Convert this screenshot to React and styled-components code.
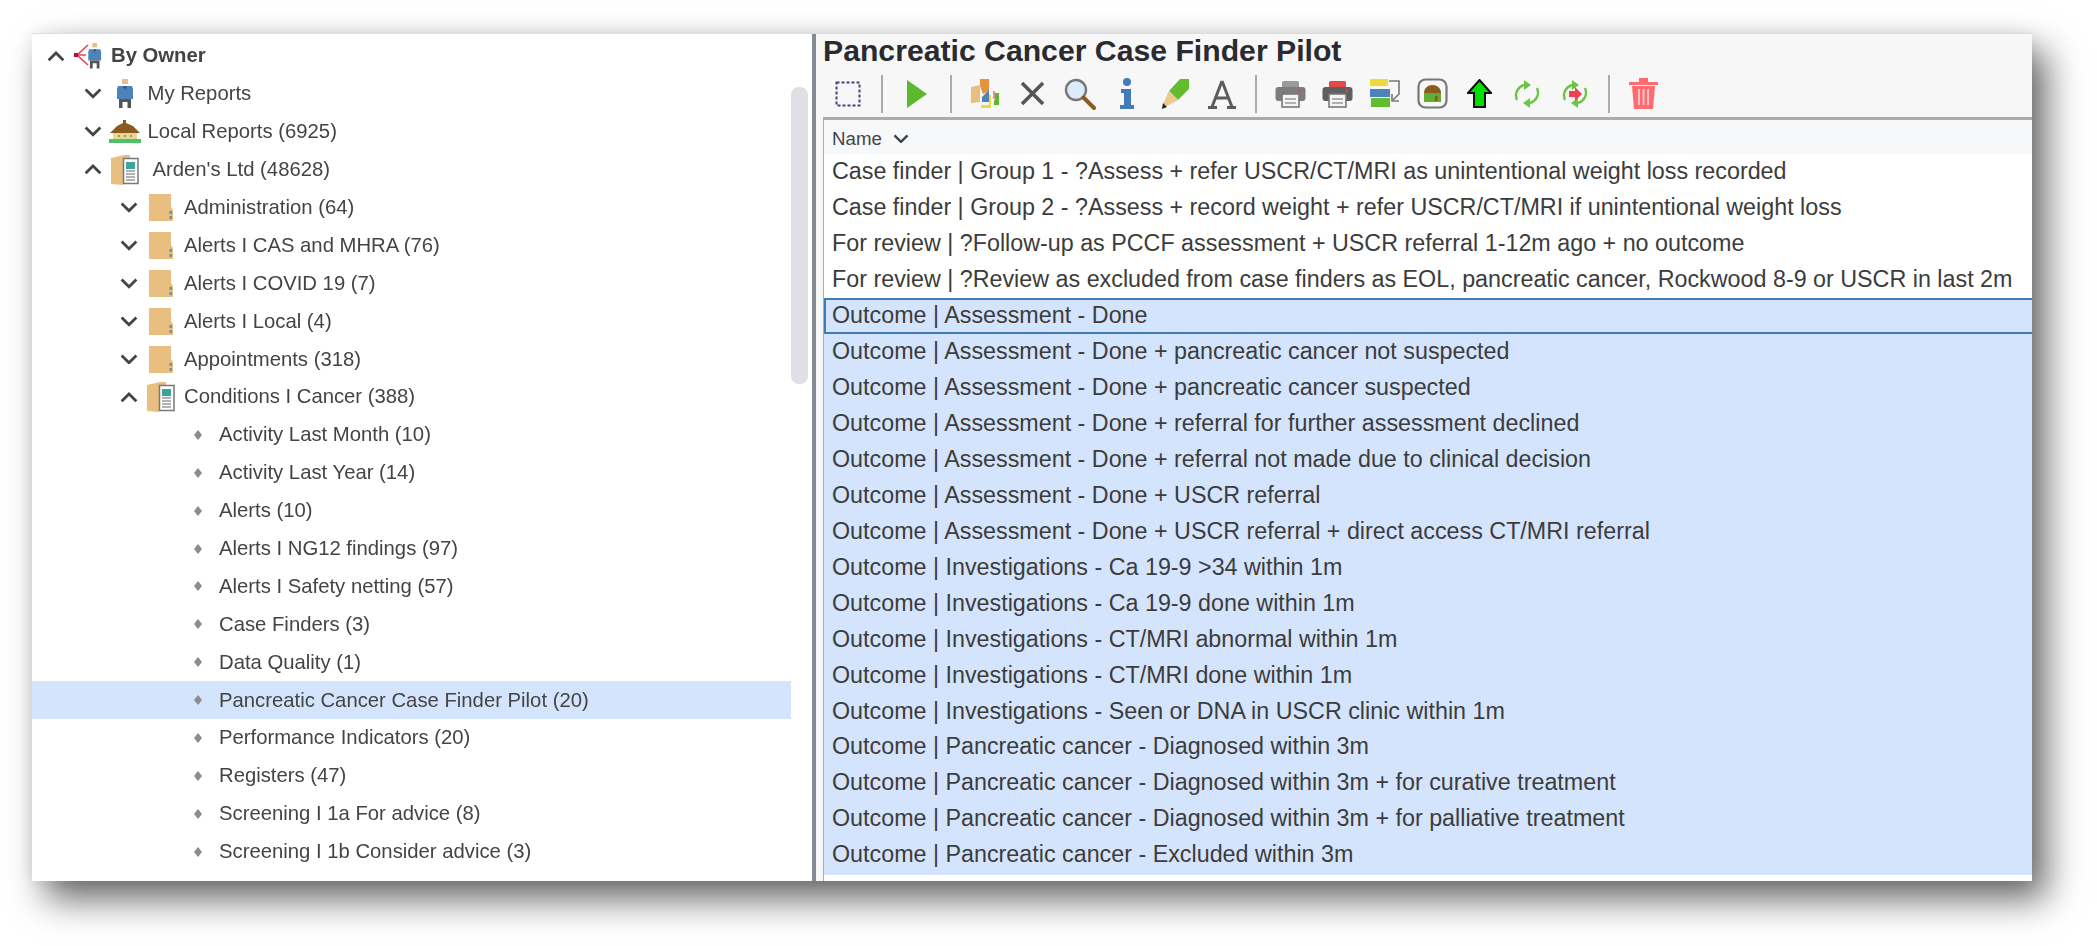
import React from 'react';
import styled, { createGlobalStyle } from 'styled-components';

const Global = createGlobalStyle`
  html, body { margin: 0; padding: 0; background: #fff; }
  body { font-family: "Liberation Sans", Arial, sans-serif; }
`;

const Page = styled.div`
  width: 2097px;
  height: 946px;
  box-sizing: border-box;
  padding: 33px 65px 65px 32px;
  overflow: hidden;
`;
const Frame = styled.div`
  display: flex;
  height: 848px;
  background: #fff;
  border-top: 1px solid #dcdce2;
  box-sizing: border-box;
  box-shadow: 14px 18px 34px rgba(0, 0, 0, 0.6), 0 0 18px rgba(0, 0, 0, 0.08);
  filter: blur(0.45px);
`;
const Left = styled.div`
  display: flex;
  width: 784px;
  flex-shrink: 0;
  overflow: hidden;
`;
const Tree = styled.div`
  width: 759px;
  padding-top: 3px;
  flex-shrink: 0;
`;
const TreeRow = styled.div`
  display: flex;
  align-items: center;
  height: 37.9px;
  padding-left: ${(p) => 12 + p.$level * 36.5}px;
  font-size: 20.3px;
  color: #444;
  font-weight: ${(p) => (p.$bold ? 700 : 400)};
  background: ${(p) => (p.$selected ? '#d4e4fc' : 'transparent')};
  white-space: nowrap;
`;
const ChevronSlot = styled.div`
  display: flex;
  justify-content: center;
  width: 24px;
  flex-shrink: 0;
`;
const IconSlot = styled.div`
  display: flex;
  justify-content: center;
  width: 40px;
  margin-right: ${(p) => p.$after || 3}px;
  flex-shrink: 0;
`;
const LeafSlot = styled.div`
  width: 25px;
  padding-left: 4px;
  display: flex;
  flex-shrink: 0;
`;
const ScrollTrack = styled.div`
  width: 17px;
  padding-top: 53px;
  flex-shrink: 0;
`;
const ScrollThumb = styled.div`
  height: 297px;
  background: #dfe0e3;
  border-radius: 8px;
`;
const Splitter = styled.div`
  width: 4px;
  margin-left: 4px;
  background: #858b92;
  flex-shrink: 0;
`;
const Right = styled.div`
  flex: 1;
  min-width: 0;
  display: flex;
  flex-direction: column;
  background: #f7f7f7;
`;
const Title = styled.div`
  box-sizing: border-box;
  height: 36px;
  padding: 0 0 3px 7px;
  display: flex;
  align-items: center;
  font-size: 30.2px;
  font-weight: 700;
  color: #2a2a30;
  white-space: nowrap;
`;
const Toolbar = styled.div`
  display: flex;
  align-items: center;
  height: 47px;
  padding-left: 8.5px;
`;
const Tool = styled.div`
  display: flex;
  align-items: center;
  justify-content: center;
  width: 47.4px;
  height: 40px;
  flex-shrink: 0;
`;
const Separator = styled.div`
  width: 21px;
  height: 38px;
  flex-shrink: 0;
  display: flex;
  justify-content: center;
  &::before {
    content: '';
    width: 2px;
    background: #a9abad;
  }
`;
const List = styled.div`
  flex: 1;
  display: flex;
  flex-direction: column;
  margin-left: 7px;
  border-top: 3px solid #a9abae;
  border-left: 1.5px solid #a9abae;
  background: #fff;
`;
const ListHeader = styled.div`
  display: flex;
  align-items: center;
  gap: 11px;
  box-sizing: border-box;
  height: 34px;
  flex-shrink: 0;
  padding: 3px 0 0 8px;
  background: #f7f8fa;
  font-size: 18.7px;
  color: #444;
`;
const ListRow = styled.div`
  display: flex;
  align-items: center;
  box-sizing: border-box;
  height: 35.95px;
  padding-left: 6px;
  font-size: 23.3px;
  color: #3c3c3c;
  white-space: nowrap;
  background: ${(p) => (p.$selected ? '#d4e4fc' : '#fff')};
  border: 2px solid ${(p) => (p.$focused ? '#3d7cb4' : 'transparent')};
  border-right: 0;
  &:last-child {
    height: 37.95px;
    padding-bottom: 2px;
  }
`;

const Chevron = ({ up, size = 18 }) => (
  <svg width={size} height={size * 0.6} viewBox="0 0 18 11">
    <path
      d={up ? 'M1.5 9.5 9 2l7.5 7.5' : 'M1.5 1.5 9 9l7.5-7.5'}
      fill="none"
      stroke="#444"
      strokeWidth="2.8"
    />
  </svg>
);

const Person = () => (
  <g>
    <rect x="6" y="0" width="6" height="5" fill="#e6c08c" />
    <path d="M2 7h14l1 3v10H1V10z" fill="#4d82ba" />
    <path d="M7 7h4l-2 4z" fill="#36587c" />
    <path d="M3 20h12v9h-3.5v-6h-5v6H3z" fill="#555" />
  </g>
);

const ByOwnerIcon = () => (
  <svg width="28" height="26" viewBox="0 0 28 26">
    <path d="M14 2 3 12l11 10M3 12h9" fill="none" stroke="#e8405c" strokeWidth="1.6" />
    <rect x="0" y="10" width="4" height="4" fill="#b01040" />
    <g transform="translate(13.5 0) scale(.8 .88)">
      <Person />
    </g>
  </svg>
);

const PersonIcon = () => (
  <svg width="18" height="29" viewBox="0 0 18 29">
    <Person />
  </svg>
);

const HouseIcon = () => (
  <svg width="32" height="24" viewBox="0 0 32 24">
    <path d="M14 0h3v3l7 3 7 7H1l7-7 6-3z" fill="#8b5a1e" />
    <rect x="4" y="13" width="24" height="6" fill="#ead49a" />
    <path d="M9 15h2v2H9zM15 15h2v2h-2zM21 15h2v2h-2z" fill="#7fb04a" />
    <rect x="0" y="19" width="32" height="4" fill="#4fc16a" />
  </svg>
);

const LedgerIcon = () => (
  <svg width="28" height="30" viewBox="0 0 28 30">
    <path d="M0 3 13 0h6v3H12v27L0 29z" fill="#e8bf80" />
    <rect x="12.5" y="3.5" width="14.5" height="25" fill="#fff" stroke="#777" strokeWidth="1.5" />
    <rect x="15" y="7" width="9" height="7" fill="#3aa59a" />
    <path d="M15 16h9M15 19h9M15 22h9M15 25h9" stroke="#666" strokeWidth="1.2" />
  </svg>
);

const FolderIcon = () => (
  <svg width="26" height="29" viewBox="0 0 26 29">
    <path d="M1 1h22v13l2 3v11H1z" fill="#e8bf80" />
    <rect x="21.5" y="18" width="2.5" height="3" fill="#6f8fa8" />
    <rect x="21.5" y="23" width="2.5" height="3" fill="#6f8fa8" />
  </svg>
);

const Diamond = () => (
  <svg width="8" height="10" viewBox="0 0 8 10">
    <path d="M4 0 8 5 4 10 0 5z" fill="#8c8c8c" />
  </svg>
);

const SelectIcon = () => (
  <svg width="26" height="26" viewBox="0 0 26 26">
    <rect x="1.5" y="1.5" width="23" height="23" fill="none" stroke="#44447a" strokeWidth="2" strokeDasharray="3 2" />
  </svg>
);
const PlayIcon = () => (
  <svg width="20" height="28" viewBox="0 0 20 28">
    <path d="M0 0 20 14 0 28z" fill="#5cb82c" />
  </svg>
);
const CopyIcon = () => (
  <svg width="28" height="30" viewBox="0 0 28 30">
    <path d="M0 8 9 6v17l-9 1z" fill="#e8bf80" />
    <path d="M9 0h9v12l-6 3-3-8z" fill="#e8923c" />
    <path d="M11 18l7-7v12h-7z" fill="#4d82ba" />
    <path d="M10 26h10v3H10z" fill="#ecd93a" />
    <path d="M18 16h2v10h-2z" fill="#ecd93a" />
    <path d="M22 12h2v8h-2z" fill="#f08a9a" />
    <path d="M24 14h4v12h-5v-5h1z" fill="#5cb82c" />
  </svg>
);
const CloseIcon = () => (
  <svg width="25" height="25" viewBox="0 0 25 25">
    <path d="M2 2 23 23M23 2 2 23" stroke="#555" strokeWidth="3.6" />
  </svg>
);
const SearchIcon = () => (
  <svg width="32" height="32" viewBox="0 0 32 32">
    <circle cx="12" cy="12" r="10" fill="#dcebfa" stroke="#777" strokeWidth="2.4" />
    <path d="M19.5 19.5 30 30" stroke="#8b5a1e" strokeWidth="4" strokeLinecap="round" />
  </svg>
);
const InfoIcon = () => (
  <svg width="16" height="31" viewBox="0 0 16 31">
    <circle cx="8" cy="4" r="4" fill="#3f7cb8" />
    <path d="M2 11h10v16h3v4H1v-4h4V15H2z" fill="#3f7cb8" />
  </svg>
);
const PencilIcon = () => (
  <svg width="28" height="30" viewBox="0 0 28 30">
    <path d="M19 0h9v10l-11 11-9-9z" fill="#62bd2e" />
    <path d="M8 12l9 9-11 6-4 1 1-5z" fill="#eec98c" />
    <path d="M1 30l1-6 4 4z" fill="#222" />
  </svg>
);
const FontIcon = () => (
  <svg width="30" height="30" viewBox="0 0 30 30">
    <path d="M15 2 5 28M15 2l10 26M8 19h14M1 28.5h9M20 28.5h9" fill="none" stroke="#5c5c5c" strokeWidth="3" />
  </svg>
);
const PrintIcon = ({ top, body }) => (
  <svg width="31" height="28" viewBox="0 0 31 28">
    <rect x="7" y="1" width="17" height="8" rx="1.5" fill={top} />
    <rect x="0.5" y="7" width="30" height="14" rx="3" fill={body} />
    <circle cx="25" cy="11" r="1.4" fill="#c95050" />
    <rect x="7" y="14" width="17" height="13" fill="#f4f4f4" stroke="#777" strokeWidth="1.6" />
    <path d="M10 19h11M10 23h11" stroke="#999" strokeWidth="1.6" />
  </svg>
);
const StackIcon = () => (
  <svg width="30" height="29" viewBox="0 0 30 29">
    <rect x="0" y="0" width="18" height="7" fill="#ecd93a" />
    <rect x="0" y="10" width="20" height="8" fill="#4d82ba" />
    <rect x="1" y="19" width="19" height="9" fill="#62bd2e" />
    <path d="M19 2h10v13l-6 6" fill="none" stroke="#777" strokeWidth="1.6" />
    <path d="M22 15v7h7" fill="none" stroke="#777" strokeWidth="1.6" />
  </svg>
);
const HouseFrameIcon = () => (
  <svg width="31" height="31" viewBox="0 0 31 31">
    <rect x="1.5" y="1.5" width="28" height="28" rx="7" fill="#f7f7f7" stroke="#777" strokeWidth="2.2" />
    <path d="M7 15c0-5 4-8 8.5-8S24 10 24 15z" fill="#8b5a1e" />
    <rect x="7" y="15" width="17" height="9" fill="#62ad36" />
    <rect x="18" y="18" width="2.5" height="5" fill="#8b5a1e" />
  </svg>
);
const UpIcon = () => (
  <svg width="25" height="29" viewBox="0 0 25 29">
    <path d="M12.5 1 24 14h-6v14H7V14H1z" fill="#00e000" stroke="#111" strokeWidth="2" />
  </svg>
);
const RefreshIcon = ({ inner }) => (
  <svg width="30" height="30" viewBox="0 0 30 30">
    <path d="M5 21C2 14 6 8 12 6" fill="none" stroke="#6cc644" strokeWidth="2.4" />
    <path d="M12 1l7 5-7 5z" fill="#6cc644" />
    <path d="M25 9c3 7-1 13-7 15" fill="none" stroke="#6cc644" strokeWidth="2.4" />
    <path d="M18 29l-7-5 7-5z" fill="#6cc644" />
    {inner && <path d="M9 12h6V8l7 7-7 7v-4H9z" fill="#f04050" />}
  </svg>
);
const TrashIcon = () => (
  <svg width="29" height="31" viewBox="0 0 29 31">
    <path d="M0 4h29v3H0zM10 0h9v4h-9z" fill="#ff6b70" />
    <path d="M3 8h23l-2 23H5z" fill="#ff6b70" />
    <path d="M10 11v16M14.5 11v16M19 11v16" stroke="#ffc4c6" strokeWidth="2" />
  </svg>
);

const leaves = [
  'Activity Last Month (10)',
  'Activity Last Year (14)',
  'Alerts (10)',
  'Alerts I NG12 findings (97)',
  'Alerts I Safety netting (57)',
  'Case Finders (3)',
  'Data Quality (1)',
  'Pancreatic Cancer Case Finder Pilot (20)',
  'Performance Indicators (20)',
  'Registers (47)',
  'Screening I 1a For advice (8)',
  'Screening I 1b Consider advice (3)',
];

const branches = [
  { level: 0, up: true, bold: true, icon: <ByOwnerIcon />, text: 'By Owner' },
  { level: 1, icon: <PersonIcon />, text: 'My Reports' },
  { level: 1, icon: <HouseIcon />, text: 'Local Reports (6925)' },
  { level: 1, up: true, icon: <LedgerIcon />, after: 8, text: "Arden's Ltd (48628)" },
  { level: 2, icon: <FolderIcon />, text: 'Administration (64)' },
  { level: 2, icon: <FolderIcon />, text: 'Alerts I CAS and MHRA (76)' },
  { level: 2, icon: <FolderIcon />, text: 'Alerts I COVID 19 (7)' },
  { level: 2, icon: <FolderIcon />, text: 'Alerts I Local (4)' },
  { level: 2, icon: <FolderIcon />, text: 'Appointments (318)' },
  { level: 2, up: true, icon: <LedgerIcon />, text: 'Conditions I Cancer (388)' },
];

const reports = [
  'Case finder | Group 1 - ?Assess + refer USCR/CT/MRI as unintentional weight loss recorded',
  'Case finder | Group 2 - ?Assess + record weight + refer USCR/CT/MRI if unintentional weight loss',
  'For review | ?Follow-up as PCCF assessment + USCR referral 1-12m ago + no outcome',
  'For review | ?Review as excluded from case finders as EOL, pancreatic cancer, Rockwood 8-9 or USCR in last 2m',
  'Outcome | Assessment - Done',
  'Outcome | Assessment - Done + pancreatic cancer not suspected',
  'Outcome | Assessment - Done + pancreatic cancer suspected',
  'Outcome | Assessment - Done + referral for further assessment declined',
  'Outcome | Assessment - Done + referral not made due to clinical decision',
  'Outcome | Assessment - Done + USCR referral',
  'Outcome | Assessment - Done + USCR referral + direct access CT/MRI referral',
  'Outcome | Investigations - Ca 19-9 >34 within 1m',
  'Outcome | Investigations - Ca 19-9 done within 1m',
  'Outcome | Investigations - CT/MRI abnormal within 1m',
  'Outcome | Investigations - CT/MRI done within 1m',
  'Outcome | Investigations - Seen or DNA in USCR clinic within 1m',
  'Outcome | Pancreatic cancer - Diagnosed within 3m',
  'Outcome | Pancreatic cancer - Diagnosed within 3m + for curative treatment',
  'Outcome | Pancreatic cancer - Diagnosed within 3m + for palliative treatment',
  'Outcome | Pancreatic cancer - Excluded within 3m',
];

export default function App() {
  return (
    <Page>
      <Global />
      <Frame>
        <Left>
          <Tree>
            {branches.map((b) => (
              <TreeRow key={b.text} $level={b.level} $bold={b.bold}>
                <ChevronSlot>
                  <Chevron up={b.up} />
                </ChevronSlot>
                <IconSlot $after={b.after}>{b.icon}</IconSlot>
                {b.text}
              </TreeRow>
            ))}
            {leaves.map((text) => (
              <TreeRow key={text} $level={4} $selected={text.startsWith('Pancreatic')}>
                <LeafSlot>
                  <Diamond />
                </LeafSlot>
                {text}
              </TreeRow>
            ))}
          </Tree>
          <ScrollTrack>
            <ScrollThumb />
          </ScrollTrack>
          <Splitter />
        </Left>
        <Right>
          <Title>Pancreatic Cancer Case Finder Pilot</Title>
          <Toolbar>
            <Tool><SelectIcon /></Tool>
            <Separator />
            <Tool><PlayIcon /></Tool>
            <Separator />
            <Tool><CopyIcon /></Tool>
            <Tool><CloseIcon /></Tool>
            <Tool><SearchIcon /></Tool>
            <Tool><InfoIcon /></Tool>
            <Tool><PencilIcon /></Tool>
            <Tool><FontIcon /></Tool>
            <Separator />
            <Tool><PrintIcon top="#9a9a9a" body="#7c7c7c" /></Tool>
            <Tool><PrintIcon top="#e84848" body="#5f5f5f" /></Tool>
            <Tool><StackIcon /></Tool>
            <Tool><HouseFrameIcon /></Tool>
            <Tool><UpIcon /></Tool>
            <Tool><RefreshIcon /></Tool>
            <Tool><RefreshIcon inner /></Tool>
            <Separator />
            <Tool><TrashIcon /></Tool>
          </Toolbar>
          <List>
            <ListHeader>
              Name
              <Chevron size={16} />
            </ListHeader>
            {reports.map((text, i) => (
              <ListRow key={text} $selected={i >= 4} $focused={i === 4}>
                {text}
              </ListRow>
            ))}
          </List>
        </Right>
      </Frame>
    </Page>
  );
}
